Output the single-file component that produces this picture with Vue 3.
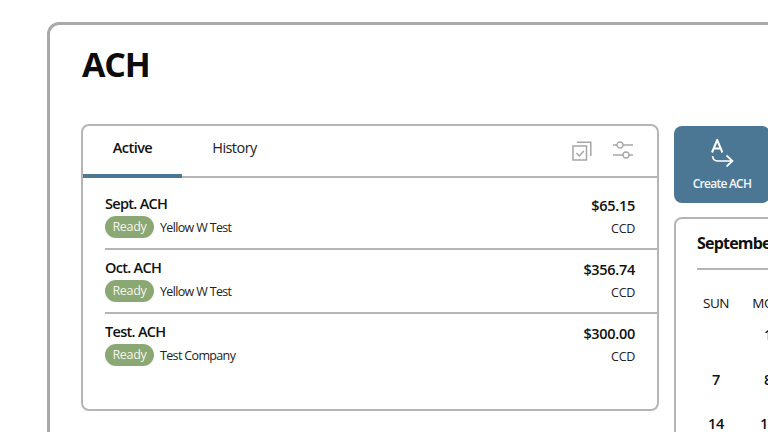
<script setup>
const rows = [
  { name: 'Sept. ACH', company: 'Yellow W Test', amount: '$65.15' },
  { name: 'Oct. ACH', company: 'Yellow W Test', amount: '$356.74' },
  { name: 'Test. ACH', company: 'Test Company', amount: '$300.00' },
]
const days = ['SUN', 'MON', 'TUE']
const weeks = [['', '1', '2'], ['7', '8', '9'], ['14', '15', '16']]
</script>

<template>
  <div class="viewport">
    <main class="frame">
      <h1 class="title">ACH</h1>
      <div class="columns">
        <section class="panel">
          <header class="tabs">
            <div class="tab active">Active</div>
            <div class="tab">History</div>
            <div class="tools">
              <svg width="20" height="20" viewBox="0 0 20 20" fill="none" stroke="#a6a6a6" stroke-width="1.5">
                <rect x="1" y="5" width="13.5" height="14" />
                <path d="M5 1.2H18.8V15" />
                <path d="M4.5 12l2.8 3 4.5-5" />
              </svg>
              <svg width="20" height="18" viewBox="0 0 20 18" fill="none" stroke="#a6a6a6" stroke-width="1.3">
                <circle cx="7" cy="4" r="3" />
                <path d="M0 4H4M10 4H20" />
                <circle cx="13" cy="14" r="3" />
                <path d="M0 14H10M16 14H20" />
              </svg>
            </div>
          </header>
          <ul class="list">
            <li v-for="r in rows" :key="r.name" class="row">
              <div class="left">
                <div class="name">{{ r.name }}</div>
                <div class="meta">
                  <span class="badge">Ready</span>
                  <span class="company">{{ r.company }}</span>
                </div>
              </div>
              <div class="right">
                <div class="amount">{{ r.amount }}</div>
                <div class="code">CCD</div>
              </div>
            </li>
          </ul>
        </section>
        <aside class="side">
          <button class="create">
            <svg width="24" height="28" viewBox="0 0 24 28" fill="none" stroke="#fff" stroke-width="1.7">
              <path d="M2 13.5L7.2 1L12.4 13.5M3.6 9.6H10.8" stroke-width="2" />
              <path d="M2.5 17c.5 3.5 2.5 5 5 5H22M16.5 16.5L22.5 22l-6 5.5" />
            </svg>
            <span>Create ACH</span>
          </button>
          <section class="calendar">
            <h2 class="month">September 2025</h2>
            <div class="grid">
              <div v-for="d in days" :key="d" class="dow">{{ d }}</div>
              <template v-for="(w, i) in weeks" :key="i">
                <div v-for="(n, j) in w" :key="j" class="day">{{ n }}</div>
              </template>
            </div>
          </section>
        </aside>
      </div>
    </main>
  </div>
</template>

<style>
html, body { margin: 0; background: #fff; overflow: hidden; }
</style>

<style scoped>
.viewport {
  width: 768px;
  height: 432px;
  overflow: hidden;
  padding: 22px 0 0 47px;
  box-sizing: border-box;
  font-family: "Open Sans", sans-serif;
  color: #111;
}
.frame {
  width: 860px;
  height: 600px;
  box-sizing: border-box;
  border: 3px solid #a9a9a9;
  border-radius: 12px;
  padding: 19px 31px;
}
.title {
  margin: 0 0 0 1px;
  font-size: 34px;
  line-height: 41px;
  font-weight: 700;
  letter-spacing: -1.2px;
  color: #0c0c0c;
}
.columns {
  display: flex;
  align-items: flex-start;
  gap: 15px;
  margin-top: 39px;
}
.panel {
  width: 578px;
  height: 287px;
  flex: none;
  box-sizing: border-box;
  border: 2px solid #b5b5b5;
  border-radius: 8px;
}
.tabs {
  display: flex;
  align-items: stretch;
  height: 52px;
  box-sizing: border-box;
  border-bottom: 2px solid #b5b5b5;
}
.tab {
  font-size: 14.5px;
  line-height: 20px;
  letter-spacing: -0.55px;
  padding-top: 12px;
  text-align: center;
  width: 99px;
  box-sizing: border-box;
  margin-bottom: -2px;
  color: #222;
  margin-left: 3px;
}
.tab.active {
  width: 99px;
  margin-left: 0;
  font-weight: 600;
  color: #111;
  border-bottom: 4px solid #4b7794;
}
.tools {
  margin-left: auto;
  display: flex;
  gap: 21px;
  align-items: flex-start;
  padding: 15px 24px 0 0;
}
.list {
  list-style: none;
  margin: 0;
  padding: 8px 0 0;
}
.row {
  display: flex;
  justify-content: space-between;
  margin-left: 22px;
  padding: 8px 22px 8px 0;
  height: 64px;
  box-sizing: border-box;
  border-bottom: 2px solid #b5b5b5;
}
.row:last-child { border-bottom: 0; }
.name {
  font-size: 14.5px;
  line-height: 20px;
  font-weight: 600;
  letter-spacing: -0.7px;
}
.meta {
  display: flex;
  align-items: center;
  gap: 6px;
  margin-top: 2px;
}
.badge {
  width: 49px;
  height: 22px;
  border-radius: 11px;
  background: #8aa874;
  color: #f2f5ec;
  font-size: 12.5px;
  letter-spacing: -0.3px;
  line-height: 22px;
  text-align: center;
}
.company {
  font-size: 12.5px;
  letter-spacing: -0.65px;
  line-height: 21px;
  color: #222;
}
.right { text-align: right; }
.amount {
  font-size: 14.5px;
  line-height: 20px;
  font-weight: 600;
  letter-spacing: -0.3px;
  margin-top: 2px;
}
.code {
  font-size: 12.5px;
  letter-spacing: -0.3px;
  line-height: 17px;
  margin-top: 4px;
  color: #222;
}
.side {
  width: 240px;
  flex: none;
  margin-top: 2px;
  display: flex;
  flex-direction: column;
  gap: 14px;
}
.create {
  width: 96px;
  height: 77px;
  border: 0;
  border-radius: 8px;
  background: #4b7794;
  color: #f3f7fa;
  font-family: inherit;
  font-size: 12px;
  font-weight: 600;
  letter-spacing: -0.75px;
  display: flex;
  flex-direction: column;
  align-items: center;
  padding: 13px 0 0;
  gap: 8px;
}
.calendar {
  box-sizing: border-box;
  height: 300px;
  border: 2px solid #b5b5b5;
  border-radius: 8px;
  padding: 14px 0 0 21px;
}
.month {
  margin: 0;
  font-size: 16px;
  line-height: 20px;
  font-weight: 700;
  letter-spacing: -0.8px;
  padding-bottom: 15px;
  border-bottom: 2px solid #b5b5b5;
  white-space: nowrap;
}
.grid {
  display: grid;
  grid-template-columns: repeat(3, 38px);
  column-gap: 14px;
  margin-top: 23px;
  grid-auto-rows: 44.5px;
  grid-template-rows: 32px;
}
.dow {
  font-size: 13.5px;
  letter-spacing: -0.4px;
  line-height: 20px;
  text-align: center;
}
.day {
  font-size: 14.5px;
  font-weight: 600;
  letter-spacing: -0.2px;
  line-height: 20px;
  text-align: center;
}
</style>
